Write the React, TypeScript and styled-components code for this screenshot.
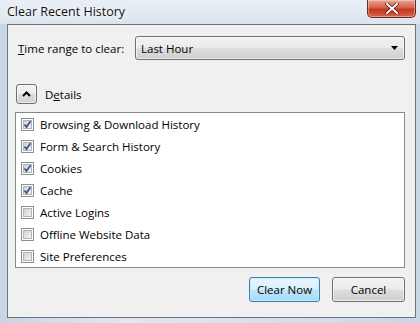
import React from "react";
import styled, { createGlobalStyle } from "styled-components";

const GlobalStyle = createGlobalStyle`
  html, body {
    margin: 0;
    padding: 0;
    width: 420px;
    height: 323px;
    overflow: hidden;
    background: #cfdbe8;
  }
  body {
    font-family: "Open Sans", "Noto Sans", "Liberation Sans", sans-serif;
    font-size: 11.5px;
    color: #000;
  }
`;

const Window = styled.div`
  width: 420px;
  height: 323px;
  display: flex;
  flex-direction: column;
  background: linear-gradient(90deg, #c7d5e4 0%, #dfe8f1 30%, #d6e1ec 60%, #c9d7e6 100%);
`;

const TitleBar = styled.div`
  height: 24px;
  display: flex;
  align-items: flex-start;
  justify-content: space-between;
  padding: 0 4px 0 7px;
  background: linear-gradient(180deg, #e9eff6 0%, #dbe5ef 100%);
`;

const Title = styled.div`
  font-size: 12.5px;
  line-height: 24px;
  color: #111;
  text-shadow: 0 0 8px #ffffff, 0 0 4px #ffffff;
`;

const CloseButton = styled.div`
  width: 47px;
  height: 17px;
  border: 1px solid #6b2a24;
  border-top: none;
  border-radius: 0 0 5px 5px;
  background: linear-gradient(180deg, #e8a593 0%, #d6614a 45%, #c4371e 55%, #d5654a 100%);
  box-shadow: inset 0 0 0 1px rgba(255, 255, 255, 0.35);
  display: flex;
  align-items: center;
  justify-content: center;
`;

const Frame = styled.div`
  flex: 1;
  display: flex;
  padding: 0 4px 5px 7px;
`;

const Client = styled.div`
  flex: 1;
  display: flex;
  flex-direction: column;
  background: #f0f0f0;
  border: 1px solid #6e7479;
  padding: 11px 10px 0 7px;
`;

const Row = styled.div`
  display: flex;
  align-items: center;
`;

const Label = styled.span`
  padding-left: 3px;
  width: 117px;
`;

const Key = styled.span`
  text-decoration: underline;
`;

const Select = styled.div`
  flex: 1;
  height: 24px;
  box-sizing: border-box;
  border: 1px solid #707070;
  border-radius: 3px;
  display: flex;
  align-items: center;
  justify-content: space-between;
  padding: 0 6px 0 5px;
  background: linear-gradient(180deg, #f2f2f2 0%, #ebebeb 48%, #dddddd 52%, #cfcfcf 100%);
  box-shadow: inset 0 0 0 1px rgba(255, 255, 255, 0.6);
`;

const DetailsRow = styled(Row)`
  margin-top: 24px;
  padding-left: 1px;
  gap: 8px;
`;

const ToggleButton = styled.div`
  width: 21px;
  height: 20px;
  box-sizing: border-box;
  border: 1px solid #707070;
  border-radius: 3px;
  background: linear-gradient(180deg, #f2f2f2 0%, #ebebeb 48%, #dddddd 52%, #cfcfcf 100%);
  box-shadow: inset 0 0 0 1px rgba(255, 255, 255, 0.6);
  display: flex;
  align-items: center;
  justify-content: center;
`;

const List = styled.div`
  margin-top: 8px;
  background: #fff;
  border: 1px solid #828790;
  display: flex;
  flex-direction: column;
`;

const Item = styled.div`
  height: 22px;
  display: flex;
  align-items: center;
  gap: 6px;
  padding-left: 5px;
`;

const Footer = styled.div`
  display: flex;
  justify-content: flex-end;
  gap: 12px;
  margin-top: 9px;
`;

const Button = styled.div<{ $default?: boolean; $w: number }>`
  width: ${(p) => p.$w}px;
  height: 25px;
  box-sizing: border-box;
  border: 1px solid ${(p) => (p.$default ? "#3c7fb1" : "#707070")};
  border-radius: 3px;
  display: flex;
  align-items: center;
  justify-content: center;
  background: ${(p) =>
    p.$default
      ? "linear-gradient(180deg, #eaf6fd 0%, #d9f0fc 48%, #bee6fd 52%, #a7d9f5 100%)"
      : "linear-gradient(180deg, #f2f2f2 0%, #ebebeb 48%, #dddddd 52%, #cfcfcf 100%)"};
  box-shadow: inset 0 0 0 1px ${(p) => (p.$default ? "rgba(200,235,250,0.9)" : "rgba(255,255,255,0.6)")};
`;

const CheckBox: React.FC<{ checked: boolean }> = ({ checked }) => (
  <svg width="13" height="13" viewBox="0 0 13 13">
    <defs>
      <linearGradient id="cbg" x1="0" y1="0" x2="1" y2="1">
        <stop offset="0" stopColor="#cbcfd5" />
        <stop offset="1" stopColor="#f6f6f6" />
      </linearGradient>
    </defs>
    <rect x="0.5" y="0.5" width="12" height="12" fill="#fff" stroke="#8e8f8f" />
    <rect x="2.5" y="2.5" width="8" height="8" fill="url(#cbg)" stroke="#b0b4bb" strokeWidth="1" />
    {checked && (
      <path d="M3.5 6.5 L5.5 9 L9.5 3.2" fill="none" stroke="#3a4f8c" strokeWidth="1.7" />
    )}
  </svg>
);

const items: [string, boolean][] = [
  ["Browsing & Download History", true],
  ["Form & Search History", true],
  ["Cookies", true],
  ["Cache", true],
  ["Active Logins", false],
  ["Offline Website Data", false],
  ["Site Preferences", false],
];

const App: React.FC = () => (
  <>
    <GlobalStyle />
    <Window>
      <TitleBar>
        <Title>Clear Recent History</Title>
        <CloseButton>
          <svg width="14" height="11" viewBox="0 0 14 11">
            <path d="M2 1 L12 10 M12 1 L2 10" stroke="#4a1a14" strokeWidth="3.6" strokeLinecap="square" />
            <path d="M2 1 L12 10 M12 1 L2 10" stroke="#ffffff" strokeWidth="2" strokeLinecap="square" />
          </svg>
        </CloseButton>
      </TitleBar>
      <Frame>
        <Client>
          <Row>
            <Label>
              <Key>T</Key>ime range to clear:
            </Label>
            <Select>
              <span>Last Hour</span>
              <svg width="7" height="4" viewBox="0 0 7 4">
                <path d="M0 0 H7 L3.5 4 Z" fill="#000" />
              </svg>
            </Select>
          </Row>
          <DetailsRow>
            <ToggleButton>
              <svg width="9" height="6" viewBox="0 0 9 6">
                <path d="M1 5 L4.5 1.5 L8 5" fill="none" stroke="#000" strokeWidth="2" />
              </svg>
            </ToggleButton>
            <span>
              D<Key>e</Key>tails
            </span>
          </DetailsRow>
          <List>
            {items.map(([name, checked]) => (
              <Item key={name}>
                <CheckBox checked={checked} />
                <span>{name}</span>
              </Item>
            ))}
          </List>
          <Footer>
            <Button $default $w={71}>Clear Now</Button>
            <Button $w={73}>Cancel</Button>
          </Footer>
        </Client>
      </Frame>
    </Window>
  </>
);

export default App;
